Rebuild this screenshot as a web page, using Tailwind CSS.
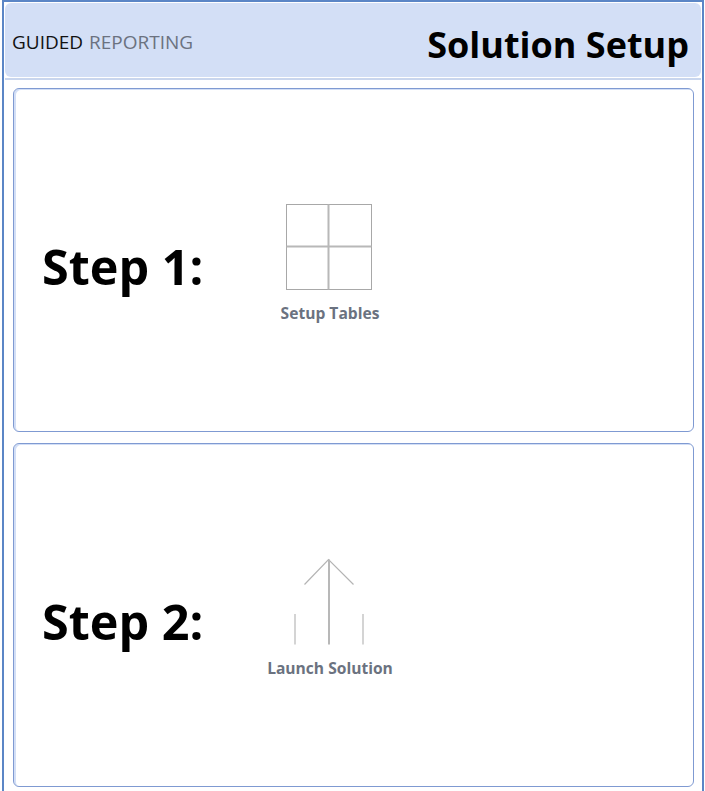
<!DOCTYPE html>
<html lang="en">
<head>
  <meta charset="UTF-8">
  <title>Solution Setup</title>
  <script src="https://cdn.jsdelivr.net/npm/@tailwindcss/browser@4"></script>
</head>
<body class="bg-white font-['Open_Sans',sans-serif]">
  <div class="ml-[2px] w-[702px] h-[791px] overflow-hidden border-x-2 border-t-2 border-[#5b86c6] px-[1px] pt-[1px]">

    <!-- header -->
    <div class="h-[77px] border-b-2 border-[#c9d6ee]">
      <div class="h-[74px] rounded-md bg-[#d3dff6] flex items-center justify-between pl-[7px] pr-[12px]">
        <div class="text-[19px] mt-[4px] text-[#6b7280]"><span class="text-[#111] mr-[1px]">GUIDED</span> REPORTING</div>
        <h1 class="text-[36px] font-bold text-black leading-none mt-[10px]">Solution Setup</h1>
      </div>
    </div>

    <div class="flex flex-col gap-[11px] pt-[8px] pl-[8px] pr-[7px]">
      <!-- step 1 -->
      <div class="h-[344px] rounded-md border border-[#7f9ad2] shadow-[inset_2px_1px_0_#d3dff6] flex items-center pl-[28px]">
        <div class="w-[225px] text-[48.5px] font-bold text-black leading-none mt-[12px]">Step 1:</div>
        <div class="flex flex-col items-center w-[126px] mt-[6px]">
          <svg class="mr-[2px]" width="88" height="88" viewBox="0 0 88 88" fill="none">
            <rect x="1.5" y="1.5" width="85" height="85" stroke="#a8a8a8"/>
            <path d="M43.5 1.5V86.5M1.5 43.5H86.5" stroke="#b8b8b8" stroke-width="2"/>
          </svg>
          <span class="text-[15.6px] font-bold text-[#6b7280] mt-[12px] leading-5">Setup Tables</span>
        </div>
      </div>

      <!-- step 2 -->
      <div class="h-[344px] rounded-md border border-[#7f9ad2] shadow-[inset_2px_1px_0_#d3dff6] flex items-center pl-[28px]">
        <div class="w-[225px] text-[48.5px] font-bold text-black leading-none mt-[12px]">Step 2:</div>
        <div class="flex flex-col items-center w-[126px] mt-[6px]">
          <svg class="mr-[2px]" width="88" height="88" viewBox="0 0 88 88" fill="none">
            <path d="M19.5 26.5L43.5 1.5L68.5 26.5" stroke="#b4b4b4" stroke-width="1.2"/>
            <path d="M44 1.5V86.5" stroke="#b8b8b8" stroke-width="2"/>
            <path d="M10 56V86.5M78 56V86.5" stroke="#d4d4d4" stroke-width="2"/>
          </svg>
          <span class="text-[15.6px] font-bold text-[#6b7280] mt-[12px] leading-5 whitespace-nowrap">Launch Solution</span>
        </div>
      </div>
    </div>
  </div>
</body>
</html>
